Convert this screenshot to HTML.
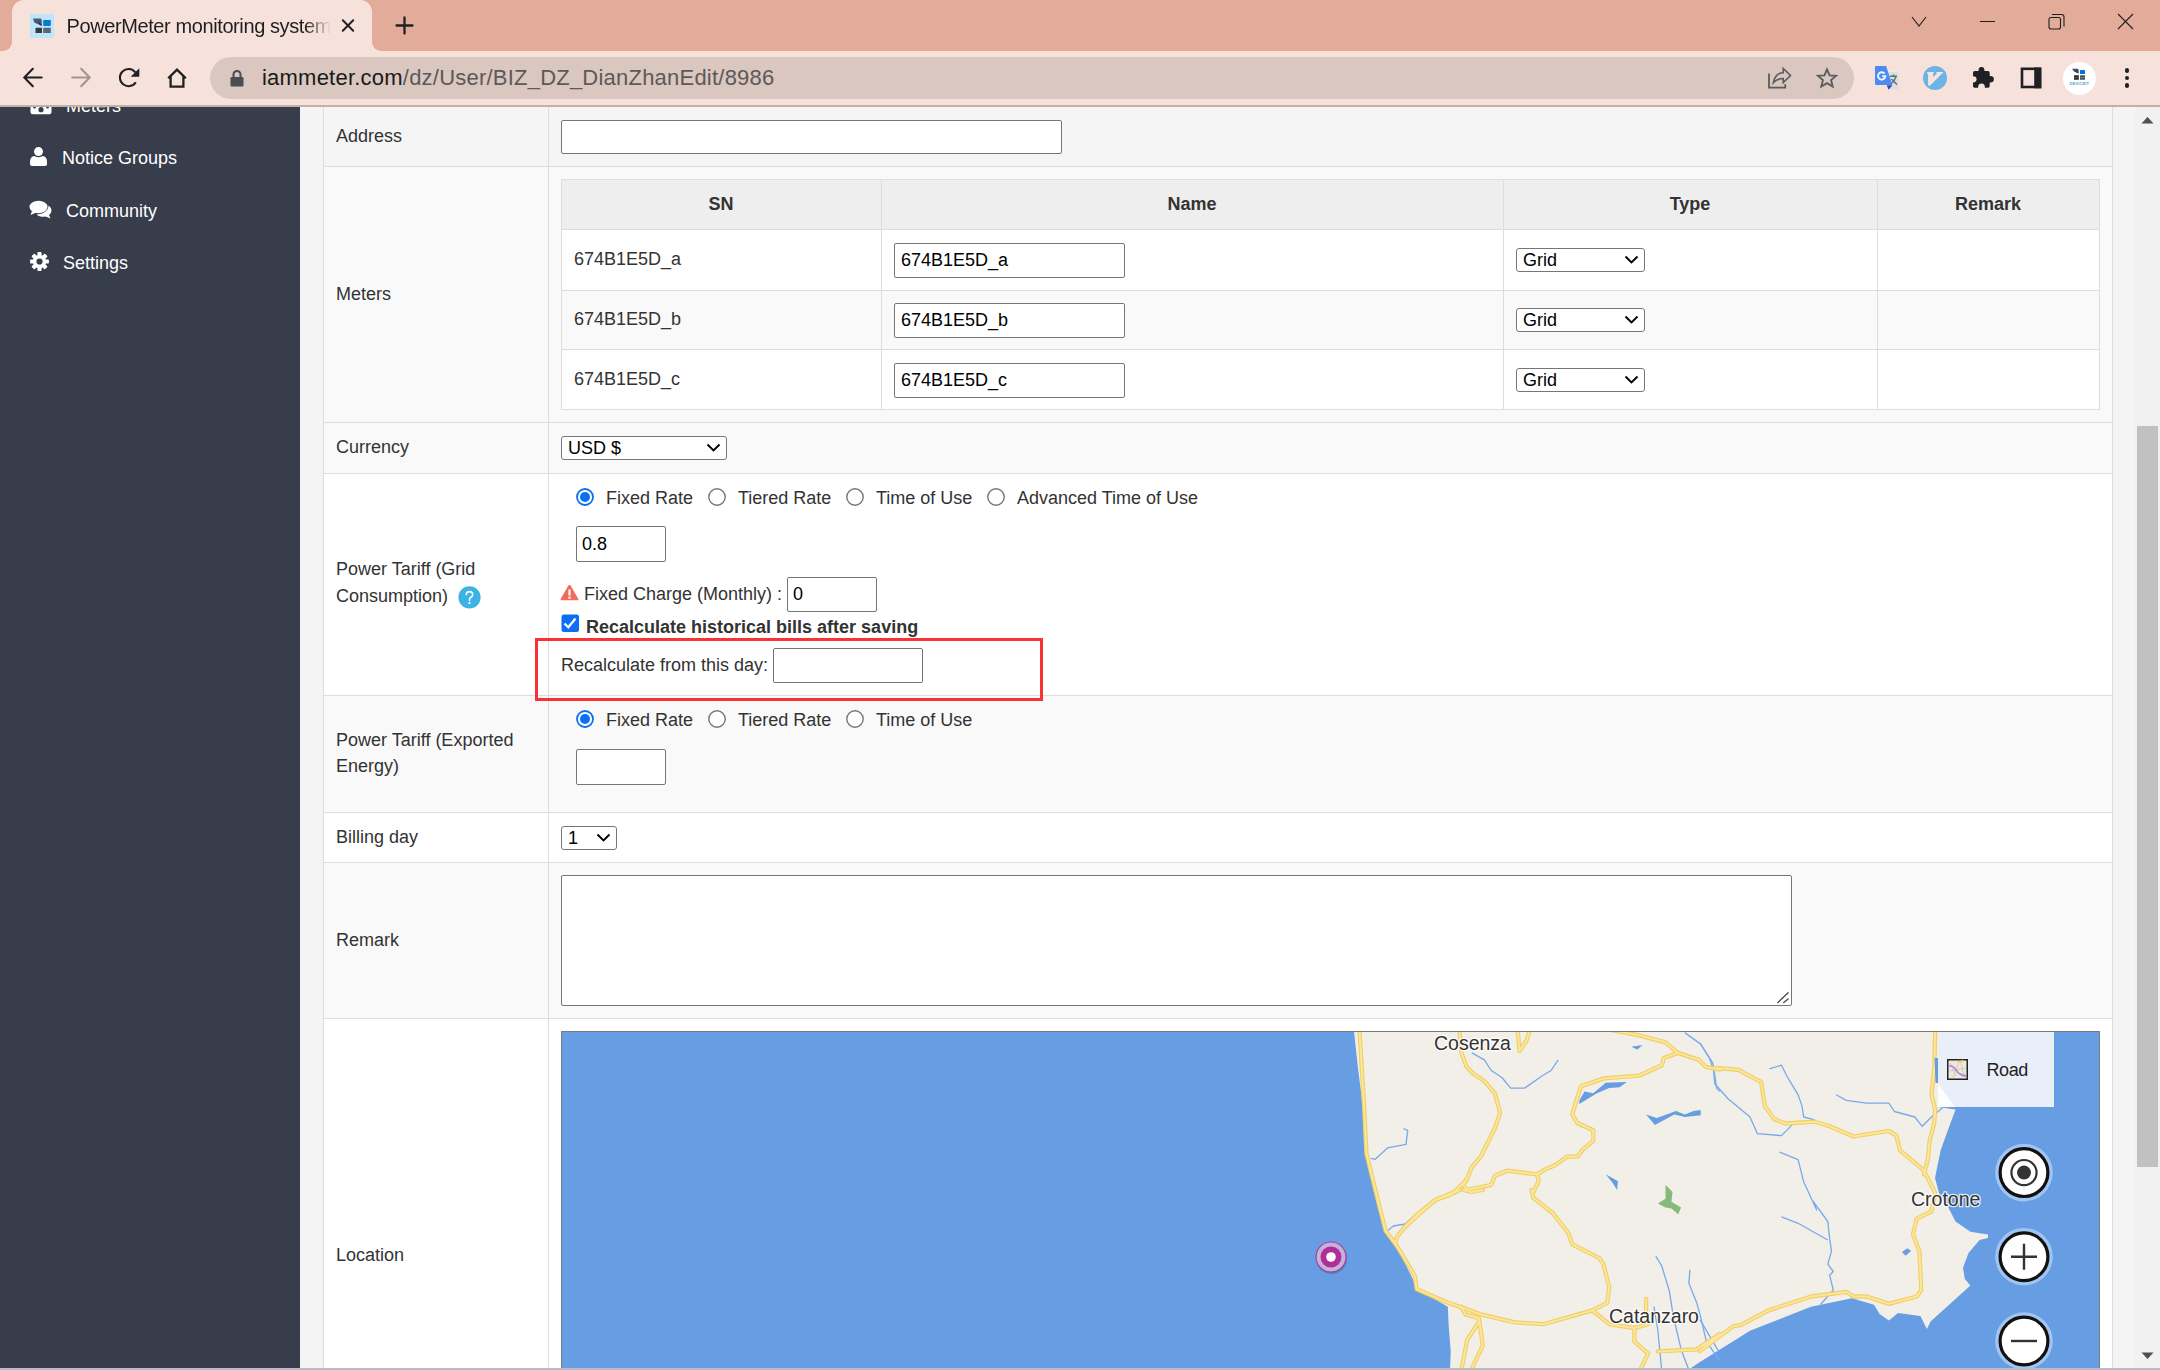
<!DOCTYPE html>
<html><head><meta charset="utf-8">
<style>
*{box-sizing:border-box;margin:0;padding:0}
html,body{width:2160px;height:1370px;overflow:hidden;background:#fff;font-family:"Liberation Sans",sans-serif;}
.a{position:absolute}
#tabbar{left:0;top:0;width:2160px;height:51px;background:#E3AC9A}
#tab{left:12px;top:0px;width:360px;height:51px;background:#F7E2DB;border-radius:12px 12px 0 0}
#toolbar{left:0;top:51px;width:2160px;height:56px;background:#F7E2DB;border-bottom:2px solid #C6AFA9}
#url{left:210px;top:57px;width:1644px;height:42px;background:#D9C7C0;border-radius:21px}
#side{left:0;top:107px;width:300px;height:1263px;background:#383D4B}
#gut{left:300px;top:107px;width:1835px;height:1263px;background:#F4F4F4}
#sb{left:2135px;top:107px;width:25px;height:1263px;background:#F1F1F1}
#thumb{left:2137px;top:426px;width:21px;height:741px;background:#C1C1C1}
#bot{left:0;top:1368px;width:2160px;height:2px;background:#B6BBC3;z-index:10}
.row{position:absolute;left:323px;width:1790px;border:1px solid #DDDDDD;border-top:none}
.lab{position:absolute;left:336px;font-size:18px;line-height:18px;color:#333;white-space:nowrap}
.side{position:absolute;color:#fff;font-size:18px;white-space:nowrap}
.inp{position:absolute;border:1px solid #767676;border-radius:2px;background:#fff}
.sel{position:absolute;border:1px solid #767676;border-radius:3px;background:#fff}
.itx{position:absolute;font-size:18px;line-height:18px;color:#000;white-space:nowrap}
.t{position:absolute;font-size:18px;line-height:18px;color:#333;white-space:nowrap}
.th{position:absolute;font-size:18px;line-height:18px;color:#333;font-weight:bold;text-align:center}
</style></head><body>
<div id="tabbar" class="a"></div>
<div id="tab" class="a"></div>
<div id="toolbar" class="a"></div>
<div id="url" class="a"></div>
<div id="side" class="a"></div>
<div id="gut" class="a"></div>
<div id="sb" class="a"></div>
<div id="thumb" class="a"></div>
<div id="bot" class="a"></div>


<!-- chrome -->
<div class="a" style="left:363px;top:41px;width:18px;height:10px;background:#F7E2DB"></div>
<div class="a" style="left:372px;top:0px;width:20px;height:51px;background:#E3AC9A;border-bottom-left-radius:9px"></div>
<div class="a" style="left:3px;top:41px;width:18px;height:10px;background:#F7E2DB"></div>
<div class="a" style="left:-8px;top:0px;width:20px;height:51px;background:#E3AC9A;border-bottom-right-radius:9px"></div>
<svg class="a" style="left:30px;top:14px" width="24" height="24" viewBox="0 0 24 24">
<rect x="0" y="0" width="24" height="24" fill="#BFE5F8"/>
<path d="M3 4.6 L10.7 4.6 Q11.6 4.8 11.7 6 L12 12 L4.3 8.4 Z" fill="#4A5A78"/>
<path d="M8 7 L12 12 L9.5 10.8 Z" fill="#1F2850"/>
<rect x="13.2" y="6" width="7.6" height="5.9" rx="0.8" fill="#0A78CC"/>
<rect x="5.5" y="13.8" width="6.5" height="5.3" rx="0.6" fill="#353A40"/>
<rect x="13.2" y="13.8" width="7.6" height="5.3" rx="0.6" fill="#56677A"/>
</svg>
<div class="a" style="left:66.5px;top:14px;font-size:20px;line-height:24px;letter-spacing:-0.4px;color:#1F1F1F;white-space:nowrap;width:265px;overflow:hidden;-webkit-mask-image:linear-gradient(to right,#000 238px,transparent 264px)">PowerMeter monitoring system</div>
<svg class="a" style="left:340px;top:18px" width="16" height="16" viewBox="0 0 16 16"><path d="M2.8 2.3 L13.2 12.7 M13.2 2.3 L2.8 12.7" stroke="#1F2023" stroke-width="2" stroke-linecap="round"/></svg>
<svg class="a" style="left:394px;top:15px" width="21" height="21" viewBox="0 0 21 21"><path d="M10.5 2.5 V18.5 M2.5 10.5 H18.5" stroke="#1F2023" stroke-width="2.3" stroke-linecap="round"/></svg>
<svg class="a" style="left:1908px;top:12px" width="22" height="18" viewBox="0 0 22 18"><path d="M4 5 L11 14 L18 5" stroke="#1F1F1F" stroke-width="1.1" fill="none"/></svg>
<div class="a" style="left:1980px;top:21px;width:15px;height:1.3px;background:#1F1F1F"></div>
<svg class="a" style="left:2046px;top:11px" width="22" height="22" viewBox="0 0 22 22"><rect x="3" y="6.5" width="11.5" height="11.5" rx="2" stroke="#1F1F1F" stroke-width="1.1" fill="none"/><path d="M6 3.5 H15.5 Q18 3.5 18 6 V15.5" stroke="#1F1F1F" stroke-width="1.1" fill="none"/></svg>
<svg class="a" style="left:2115px;top:11px" width="21" height="21" viewBox="0 0 21 21"><path d="M3 3 L18 18 M18 3 L3 18" stroke="#1F1F1F" stroke-width="1.1"/></svg>
<!-- toolbar icons -->
<svg class="a" style="left:20px;top:65px" width="26" height="26" viewBox="0 0 26 26"><path d="M12.8 3.8 L4.3 12.5 L12.8 21.2 M4.3 12.5 H21.7" stroke="#1F2023" stroke-width="2.1" fill="none" stroke-linecap="round" stroke-linejoin="miter"/></svg>
<svg class="a" style="left:68px;top:65px" width="26" height="26" viewBox="0 0 26 26"><path d="M13.2 3.8 L21.7 12.5 L13.2 21.2 M4.3 12.5 H21.7" stroke="#A39592" stroke-width="2.1" fill="none" stroke-linecap="round"/></svg>
<svg class="a" style="left:116px;top:65px" width="26" height="26" viewBox="0 0 26 26"><path d="M19.8 17.2 A8.6 8.6 0 1 1 19.3 7.3" stroke="#1F2023" stroke-width="2.1" fill="none"/><path d="M23.3 3.2 V11.8 H14.7 Z" fill="#1F2023"/></svg>
<svg class="a" style="left:164px;top:65px" width="26" height="26" viewBox="0 0 26 26"><path d="M4.2 13.2 L13 4.6 L21.8 13.2 M6.6 11.2 V21.6 H19.4 V11.2" stroke="#1F2023" stroke-width="2.3" fill="none" stroke-linejoin="miter"/></svg>
<svg class="a" style="left:229px;top:69px" width="16" height="19" viewBox="0 0 16 19"><path d="M4.5 8 V5.5 A3.5 3.5 0 0 1 11.5 5.5 V8" stroke="#4A4D52" stroke-width="2" fill="none"/><rect x="1.5" y="8" width="13" height="9.5" rx="1.3" fill="#4A4D52"/></svg>
<div class="a" style="left:262px;top:63px;font-size:22px;line-height:30px;letter-spacing:0.22px;color:#5E5957;white-space:nowrap"><span style="color:#1A1A1A">iammeter.com</span>/dz/User/BIZ_DZ_DianZhanEdit/8986</div>
<svg class="a" style="left:1766px;top:66px" width="28" height="25" viewBox="0 0 28 25"><path d="M3 7.6 V21.6 H19.2 V18.3" stroke="#5B5C5E" stroke-width="1.8" fill="none"/><path d="M7.3 16.8 C8 11 12 6.7 17.2 6.7 V2.4 L24.5 9.5 L17.2 16.6 V12.5 C13 12.5 9.8 14 7.3 16.8 Z" stroke="#5B5C5E" stroke-width="1.6" fill="none" stroke-linejoin="miter"/></svg>
<svg class="a" style="left:1814px;top:66px" width="26" height="24" viewBox="0 0 26 24"><g transform="translate(13 12) scale(0.89) translate(-13 -11.5)"><path d="M13 1.8 L15.9 8.5 L23.2 9.1 L17.6 13.9 L19.4 21 L13 17.2 L6.6 21 L8.4 13.9 L2.8 9.1 L10.1 8.5 Z" stroke="#5B5C5E" stroke-width="2.1" fill="none" stroke-linejoin="miter"/></g></svg>
<svg class="a" style="left:1874px;top:65px" width="26" height="27" viewBox="0 0 26 27"><rect x="14.7" y="5.4" width="9.8" height="19.2" fill="#DEDEDE"/><rect x="14.7" y="5.4" width="9.8" height="1.2" fill="#F2F2F2"/><path d="M16 11.2 H23 M19.5 9.5 V11.2 M22 11.5 Q20 17 16.5 19 M17.5 14 L23 19.5" stroke="#55707A" stroke-width="1.4" fill="none"/><path d="M2 1.1 H12.1 L18.4 20.1 H2.4 Q1 20.1 1 18.7 V2.1 Q1 1.1 2 1.1 Z" fill="#4C8BF0"/><path d="M12.8 20.2 H18.4 L14.5 24.8 Z" fill="#3846B8"/><path d="M10.6 8.6 A3.7 3.7 0 1 0 11.4 11.2 H8.2" stroke="#F4F6FA" stroke-width="1.9" fill="none"/></svg>
<svg class="a" style="left:1923px;top:66px" width="24" height="24" viewBox="0 0 24 24"><circle cx="12" cy="12" r="12" fill="#6AB4E6"/><path d="M4.1 6.05 H10.9 L10.2 8.15 V10.95 L13.7 7.7 L13.2 6.05 H20.7 L7.15 19.6 H5.05 V8.15 L4.1 7.2 Z" fill="#F5E3DD"/></svg>
<svg class="a" style="left:1971px;top:66px" width="24" height="23" viewBox="0 0 24 23"><path d="M3.6 5 H7.6 Q7.2 0.9 10.5 0.9 Q13.8 0.9 13.4 5 H17 Q18.7 5 18.7 6.7 V10 Q22.9 9.8 22.9 13.3 Q22.9 16.8 18.7 16.6 V20.1 Q18.7 21.8 17 21.8 H13.9 Q14 17.6 10.5 17.6 Q7 17.6 7.1 21.8 H3.7 Q2 21.8 2 20.1 V16.4 Q5.6 16.4 5.6 13.3 Q5.6 10.2 2 10.2 V6.7 Q2 5 3.6 5 Z" fill="#1F2023"/></svg>
<svg class="a" style="left:2019px;top:66px" width="24" height="24" viewBox="0 0 24 24"><rect x="3" y="2.8" width="18" height="18.2" stroke="#1F2023" stroke-width="2.6" fill="none"/><rect x="15.2" y="1.5" width="7.1" height="20.8" fill="#1F2023"/></svg>
<svg class="a" style="left:2062px;top:62px" width="34" height="33" viewBox="0 0 34 33"><circle cx="17.4" cy="16.4" r="16.5" fill="#FFFFFF"/><path d="M10 6.7 H15.6 Q16.5 7 16.6 8 L16.8 11.6 L12 9.5 Z" fill="#3B4C6B"/><path d="M13.5 8.5 L16.8 11.6 L14.5 10.6 Z" fill="#1B2450"/><rect x="18" y="8" width="5" height="4" rx="0.6" fill="#0A6FCC"/><rect x="12" y="13.2" width="4.9" height="4.6" rx="0.6" fill="#22262B"/><rect x="18" y="13.2" width="5" height="4.6" rx="0.6" fill="#3E5068"/><path d="M12 15.5 H17 M18 15.5 H23" stroke="#fff" stroke-width="0.4" opacity="0.6"/><text x="17.2" y="23.2" text-anchor="middle" font-family="Liberation Sans" font-weight="bold" font-size="4" textLength="19.5" fill="#45A8DD">DEVICEIT</text></svg>
<div class="a" style="left:2124.7px;top:68px;width:4.6px;height:4.6px;border-radius:50%;background:#1F2023"></div>
<div class="a" style="left:2124.7px;top:75.7px;width:4.6px;height:4.6px;border-radius:50%;background:#1F2023"></div>
<div class="a" style="left:2124.7px;top:83.2px;width:4.6px;height:4.6px;border-radius:50%;background:#1F2023"></div>


<!-- sidebar -->
<div class="a" style="left:0;top:107px;width:300px;height:200px;overflow:hidden">
<svg class="a" style="left:30px;top:-11px" width="22" height="19" viewBox="0 0 22 19"><path d="M0.5 9 Q0.5 1 11 1 Q21.5 1 21.5 9 V16 Q21.5 18.3 19.3 18.3 H2.7 Q0.5 18.3 0.5 16 Z" fill="#fff"/><circle cx="11" cy="13.7" r="2.6" fill="#383D4B"/><circle cx="4.5" cy="11" r="1.5" fill="#383D4B"/><circle cx="17.5" cy="11" r="1.5" fill="#383D4B"/></svg>
<div class="side" style="left:66px;top:-10px;line-height:18px">Meters</div>
</div>
<svg class="a" style="left:29px;top:146px" width="20" height="21" viewBox="0 0 20 21"><circle cx="9.5" cy="5.6" r="4.5" fill="#fff"/><path d="M1 16 Q1 10.5 5.5 10 Q9.5 12.5 13.5 10 Q18 10.5 18 16 V18 Q18 20 16 20 H3 Q1 20 1 18 Z" fill="#fff"/></svg>
<div class="side" style="left:62px;top:149px;line-height:18px">Notice Groups</div>
<svg class="a" style="left:29px;top:200px" width="24" height="21" viewBox="0 0 24 21"><ellipse cx="9.5" cy="7" rx="9" ry="6.2" fill="#fff"/><path d="M3 11 L1.5 15 L7.5 12.5 Z" fill="#fff"/><path d="M19.5 5.5 Q22.5 7.5 22.5 10.5 Q22.5 13.5 20 15 L21.5 18.5 L16.5 16.5 Q14 17 11.5 16.5 Q9 16 7.5 14.5 Q15 14 18 10 Q19.5 8 19.5 5.5 Z" fill="#fff"/></svg>
<div class="side" style="left:66px;top:202px;line-height:18px">Community</div>
<svg class="a" style="left:29px;top:251px" width="21" height="21" viewBox="0 0 21 21"><circle cx="10.5" cy="10.5" r="6.6" fill="#fff"/><g fill="#fff" transform="translate(10.5 10.5)"><rect x="-2.1" y="-9.4" width="4.2" height="5" rx="0.8"/><rect x="-2.1" y="4.4" width="4.2" height="5" rx="0.8"/><rect x="-9.4" y="-2.1" width="5" height="4.2" rx="0.8"/><rect x="4.4" y="-2.1" width="5" height="4.2" rx="0.8"/><g transform="rotate(45)"><rect x="-2.1" y="-9.4" width="4.2" height="5" rx="0.8"/><rect x="-2.1" y="4.4" width="4.2" height="5" rx="0.8"/><rect x="-9.4" y="-2.1" width="5" height="4.2" rx="0.8"/><rect x="4.4" y="-2.1" width="5" height="4.2" rx="0.8"/></g></g><circle cx="10.5" cy="10.5" r="3.1" fill="#383D4B"/></svg>
<div class="side" style="left:63px;top:254px;line-height:18px">Settings</div>

<!-- form rows -->
<div class="row" style="top:107px;height:60px;background:#F5F5F5"></div>
<div class="row" style="top:167px;height:256px;background:#F9F9F9"></div>
<div class="row" style="top:423px;height:51px;background:#F9F9F9"></div>
<div class="row" style="top:474px;height:222px;background:#FFFFFF"></div>
<div class="row" style="top:696px;height:117px;background:#F9F9F9"></div>
<div class="row" style="top:813px;height:50px;background:#FFFFFF"></div>
<div class="row" style="top:863px;height:156px;background:#F9F9F9"></div>
<div class="row" style="top:1019px;height:360px;background:#FFFFFF"></div>
<div class="a" style="left:548px;top:107px;width:1px;height:1263px;background:#DDDDDD"></div>
<div class="lab" style="top:127px">Address</div>
<div class="lab" style="top:285px">Meters</div>
<div class="lab" style="top:438px">Currency</div>
<div class="lab" style="top:556px;line-height:27px">Power Tariff (Grid<br>Consumption)</div>
<div class="lab" style="top:727px;line-height:26px">Power Tariff (Exported<br>Energy)</div>
<div class="lab" style="top:828px">Billing day</div>
<div class="lab" style="top:931px">Remark</div>
<div class="lab" style="top:1246px">Location</div>

<!-- map -->
<svg class="a" style="left:561px;top:1031px" width="1539" height="339" viewBox="0 0 1539 339">
<rect x="0" y="0" width="1539" height="339" fill="#669DE3"/>
<polygon points="793.0,0.0 1377.0,0.0 1377.0,76.0 1394.5,78.6 1379.7,119.0 1374.0,147.0 1378.0,162.0 1387.0,175.7 1394.5,190.5 1409.4,200.7 1427.0,203.4 1427.0,207.0 1418.6,209.0 1407.5,222.0 1402.0,236.8 1403.8,247.9 1409.4,254.4 1369.6,290.5 1365.9,297.9 1359.4,285.0 1337.0,282.0 1327.9,289.6 1318.6,283.0 1313.0,273.8 1290.9,267.3 1250.0,275.7 1189.0,299.7 1139.0,331.0 1127.0,339.0 889.0,339.0 889.7,320.4 887.7,295.0 886.8,275.7 863.4,262.0 855.7,256.2 834.0,211.5 822.6,197.9 814.0,164.0 807.0,131.0 803.6,104.6 801.0,69.0 796.6,34.0 793.0,0.0" fill="#F2EFE9"/>
<polygon points="1018.3,69.4 1023.5,60.6 1032.3,62.3 1044.7,51.8 1065.8,50.9 1058.7,56.2 1048.2,57.1 1035.9,62.3 1018.3,72.9" fill="#669DE3"/>
<polygon points="1085.1,83.4 1095.7,87.0 1115.0,79.9 1123.8,83.4 1132.6,79.9 1139.7,79.0 1139.7,84.3 1123.8,86.1 1113.3,83.4 1093.9,94.0" fill="#669DE3"/>
<polygon points="1070.2,15.7 1081.6,14.0 1076.3,18.4" fill="#669DE3"/>
<polygon points="1044.7,143.3 1057.0,150.3 1056.1,159.1 1051.7,152.1" fill="#669DE3"/>
<polygon points="1340.9,221.0 1346.4,217.3 1350.1,220.1 1344.6,224.7" fill="#669DE3"/>
<polygon points="1104.5,153.8 1111.5,160.9 1110.6,169.0 1110.4,170.7 1120.1,176.5 1117.2,183.3 1110.4,177.5 1104.5,176.5 1096.8,172.6 1104.5,167.7" fill="#86BA7A"/>
<polyline points="910.9,21.9 923.3,28.9 930.3,39.5 940.9,46.5 949.7,57.1 963.7,57.1 981.3,44.7 990.1,39.5 997.2,28.9" fill="none" stroke="#78A9EA" stroke-width="1.3" stroke-linejoin="round"/>
<polyline points="842.3,97.5 846.7,99.3 845.0,113.4 826.5,116.9 814.2,128.3 809.8,127.4" fill="none" stroke="#78A9EA" stroke-width="1.3" stroke-linejoin="round"/>
<polyline points="1139.0,12.0 1152.0,32.3 1153.8,52.7 1166.8,67.5 1189.0,86.0 1196.4,102.7 1220.5,104.6 1231.6,93.4" fill="none" stroke="#78A9EA" stroke-width="1.3" stroke-linejoin="round"/>
<polyline points="1123.8,1.6 1139.7,13.1 1148.5,27.1 1153.7,43.0 1155.5,57.1 1159.0,60.6" fill="none" stroke="#78A9EA" stroke-width="1.3" stroke-linejoin="round"/>
<polyline points="1208.4,37.9 1220.5,34.2 1226.0,45.3 1237.1,63.8 1240.9,74.9 1242.7,86.0 1253.8,88.8" fill="none" stroke="#78A9EA" stroke-width="1.3" stroke-linejoin="round"/>
<polyline points="1275.1,63.8 1285.3,69.4 1305.7,72.1 1327.9,72.1 1333.4,80.5 1353.8,86.0 1361.2,95.3 1370.5,86.0 1381.6,76.8" fill="none" stroke="#78A9EA" stroke-width="1.3" stroke-linejoin="round"/>
<polyline points="1218.6,121.2 1237.1,128.6 1242.7,150.9 1255.7,179.0 1252.0,170.1 1266.8,190.5 1268.6,207.1 1270.5,220.1 1266.8,233.1 1272.3,240.5 1268.6,244.2 1272.3,259.0 1259.4,273.8" fill="none" stroke="#78A9EA" stroke-width="1.3" stroke-linejoin="round"/>
<polyline points="1220.5,185.9 1237.1,192.3 1266.8,209.0" fill="none" stroke="#78A9EA" stroke-width="1.3" stroke-linejoin="round"/>
<polyline points="1139.0,288.6 1157.5,320.1" fill="none" stroke="#78A9EA" stroke-width="1.3" stroke-linejoin="round"/>
<polyline points="826.5,199.8 832.3,195.0 844.0,193.0 851.8,186.2 863.4,176.5 869.3,172.6" fill="none" stroke="#78A9EA" stroke-width="1.3" stroke-linejoin="round"/>
<polyline points="1094.8,225.1 1100.7,234.8 1108.4,260.1 1112.3,285.4 1120.1,318.4 1127.9,339.1" fill="none" stroke="#78A9EA" stroke-width="1.3" stroke-linejoin="round"/>
<polyline points="1128.9,238.7 1127.9,252.3 1135.7,271.8 1139.5,285.4 1145.4,310.7 1159.0,330.1" fill="none" stroke="#78A9EA" stroke-width="1.3" stroke-linejoin="round"/>
<polyline points="1092.9,275.7 1096.8,299.0 1100.7,339.1" fill="none" stroke="#78A9EA" stroke-width="1.3" stroke-linejoin="round"/>
<polyline points="798.4,-1.0 802.8,69.4 805.4,122.2 816.8,169.0 824.6,199.8 836.2,215.4 853.7,244.6 855.7,258.2 886.8,271.8 904.3,277.6 919.8,283.4 952.9,291.2 982.0,293.2 1030.7,279.6 1046.2,271.8 1048.2,256.2 1042.3,232.9 1038.4,227.1 1011.2,213.4 1007.3,201.8 991.8,182.3 972.3,166.8 970.4,159.0 972.5,160.9 977.8,150.3 976.0,143.3" fill="none" stroke="#F0CF66" stroke-width="4.3" stroke-linejoin="round" stroke-linecap="round"/>
<polyline points="898.6,-1.0 900.4,21.9 905.7,35.9 912.7,43.0 923.3,50.0 933.8,62.3 939.1,81.7 933.8,97.5 926.8,111.6 919.7,125.7 910.9,136.2 905.7,148.5 893.4,160.9 874.0,169.0 844.0,195.9 836.2,205.7 834.3,211.5" fill="none" stroke="#F0CF66" stroke-width="4.3" stroke-linejoin="round" stroke-linecap="round"/>
<polyline points="844.0,195.9 857.6,182.3 875.1,168.7 886.8,164.8 898.4,159.0" fill="none" stroke="#F0CF66" stroke-width="4.3" stroke-linejoin="round" stroke-linecap="round"/>
<polyline points="956.7,-1.0 958.5,20.1 965.5,9.6 969.0,-1.0" fill="none" stroke="#F0CF66" stroke-width="4.3" stroke-linejoin="round" stroke-linecap="round"/>
<polyline points="1049.9,-1.0 1078.1,4.3 1104.5,11.3 1116.8,21.9 1137.9,28.9 1144.9,35.9 1159.0,38.6 1155.7,37.0 1177.9,38.8 1185.3,43.4 1200.1,50.9 1203.8,74.9 1213.1,87.9 1224.2,92.5 1253.8,90.7 1268.6,95.3 1292.7,105.5 1327.9,99.9 1335.3,104.6 1339.0,119.4 1361.2,137.9 1366.8,147.1 1374.2,162.0 1370.5,180.3 1355.7,187.7 1352.0,203.4 1358.4,220.1 1360.3,259.0 1355.7,265.5 1327.9,272.9 1305.7,265.5 1292.7,265.5 1285.3,260.9 1250.1,265.5 1207.5,279.4 1179.7,294.2 1172.3,295.1 1139.0,320.1 1159.0,302.9 1135.7,318.4 1096.8,320.4" fill="none" stroke="#F0CF66" stroke-width="4.3" stroke-linejoin="round" stroke-linecap="round"/>
<polyline points="1116.8,21.9 1102.7,27.1 1101.0,34.2 1078.1,44.7 1042.9,47.4 1020.0,55.3 1016.5,65.9 1011.2,83.4 1016.5,92.2 1032.3,99.3 1032.3,109.8 1021.8,118.6 1016.5,125.7 1006.0,125.7 993.6,134.5 984.8,138.0 976.0,143.3 946.1,139.7 933.8,145.0 930.3,153.8 905.7,159.1 902.2,153.8 905.7,148.5" fill="none" stroke="#F0CF66" stroke-width="4.3" stroke-linejoin="round" stroke-linecap="round"/>
<polyline points="1374.2,-1.0 1373.3,36.0 1370.5,63.8 1374.2,78.6 1373.3,91.6 1368.6,110.1 1366.8,128.6 1363.1,143.4" fill="none" stroke="#F0CF66" stroke-width="4.3" stroke-linejoin="round" stroke-linecap="round"/>
<polyline points="1032.6,280.5 1048.2,293.2 1073.4,297.1 1087.0,293.2" fill="none" stroke="#F0CF66" stroke-width="4.3" stroke-linejoin="round" stroke-linecap="round"/>
<polyline points="1073.4,297.1 1073.4,310.7 1087.0,322.3 1079.3,339.1" fill="none" stroke="#F0CF66" stroke-width="4.3" stroke-linejoin="round" stroke-linecap="round"/>
<polyline points="900.4,275.7 904.3,283.4 917.9,287.3 921.8,314.6 910.1,339.1" fill="none" stroke="#F0CF66" stroke-width="4.3" stroke-linejoin="round" stroke-linecap="round"/>
<polyline points="917.9,291.2 906.2,308.7 900.4,339.1" fill="none" stroke="#F0CF66" stroke-width="4.3" stroke-linejoin="round" stroke-linecap="round"/>
<polyline points="1085.1,267.9 1085.1,279.6" fill="none" stroke="#F0CF66" stroke-width="4.3" stroke-linejoin="round" stroke-linecap="round"/>
<polyline points="902.3,159.0 910.1,160.9 921.8,159.0" fill="none" stroke="#F0CF66" stroke-width="4.3" stroke-linejoin="round" stroke-linecap="round"/>
<polyline points="798.4,-1.0 802.8,69.4 805.4,122.2 816.8,169.0 824.6,199.8 836.2,215.4 853.7,244.6 855.7,258.2 886.8,271.8 904.3,277.6 919.8,283.4 952.9,291.2 982.0,293.2 1030.7,279.6 1046.2,271.8 1048.2,256.2 1042.3,232.9 1038.4,227.1 1011.2,213.4 1007.3,201.8 991.8,182.3 972.3,166.8 970.4,159.0 972.5,160.9 977.8,150.3 976.0,143.3" fill="none" stroke="#FBE69C" stroke-width="2.0" stroke-linejoin="round" stroke-linecap="round"/>
<polyline points="898.6,-1.0 900.4,21.9 905.7,35.9 912.7,43.0 923.3,50.0 933.8,62.3 939.1,81.7 933.8,97.5 926.8,111.6 919.7,125.7 910.9,136.2 905.7,148.5 893.4,160.9 874.0,169.0 844.0,195.9 836.2,205.7 834.3,211.5" fill="none" stroke="#FBE69C" stroke-width="2.0" stroke-linejoin="round" stroke-linecap="round"/>
<polyline points="844.0,195.9 857.6,182.3 875.1,168.7 886.8,164.8 898.4,159.0" fill="none" stroke="#FBE69C" stroke-width="2.0" stroke-linejoin="round" stroke-linecap="round"/>
<polyline points="956.7,-1.0 958.5,20.1 965.5,9.6 969.0,-1.0" fill="none" stroke="#FBE69C" stroke-width="2.0" stroke-linejoin="round" stroke-linecap="round"/>
<polyline points="1049.9,-1.0 1078.1,4.3 1104.5,11.3 1116.8,21.9 1137.9,28.9 1144.9,35.9 1159.0,38.6 1155.7,37.0 1177.9,38.8 1185.3,43.4 1200.1,50.9 1203.8,74.9 1213.1,87.9 1224.2,92.5 1253.8,90.7 1268.6,95.3 1292.7,105.5 1327.9,99.9 1335.3,104.6 1339.0,119.4 1361.2,137.9 1366.8,147.1 1374.2,162.0 1370.5,180.3 1355.7,187.7 1352.0,203.4 1358.4,220.1 1360.3,259.0 1355.7,265.5 1327.9,272.9 1305.7,265.5 1292.7,265.5 1285.3,260.9 1250.1,265.5 1207.5,279.4 1179.7,294.2 1172.3,295.1 1139.0,320.1 1159.0,302.9 1135.7,318.4 1096.8,320.4" fill="none" stroke="#FBE69C" stroke-width="2.0" stroke-linejoin="round" stroke-linecap="round"/>
<polyline points="1116.8,21.9 1102.7,27.1 1101.0,34.2 1078.1,44.7 1042.9,47.4 1020.0,55.3 1016.5,65.9 1011.2,83.4 1016.5,92.2 1032.3,99.3 1032.3,109.8 1021.8,118.6 1016.5,125.7 1006.0,125.7 993.6,134.5 984.8,138.0 976.0,143.3 946.1,139.7 933.8,145.0 930.3,153.8 905.7,159.1 902.2,153.8 905.7,148.5" fill="none" stroke="#FBE69C" stroke-width="2.0" stroke-linejoin="round" stroke-linecap="round"/>
<polyline points="1374.2,-1.0 1373.3,36.0 1370.5,63.8 1374.2,78.6 1373.3,91.6 1368.6,110.1 1366.8,128.6 1363.1,143.4" fill="none" stroke="#FBE69C" stroke-width="2.0" stroke-linejoin="round" stroke-linecap="round"/>
<polyline points="1032.6,280.5 1048.2,293.2 1073.4,297.1 1087.0,293.2" fill="none" stroke="#FBE69C" stroke-width="2.0" stroke-linejoin="round" stroke-linecap="round"/>
<polyline points="1073.4,297.1 1073.4,310.7 1087.0,322.3 1079.3,339.1" fill="none" stroke="#FBE69C" stroke-width="2.0" stroke-linejoin="round" stroke-linecap="round"/>
<polyline points="900.4,275.7 904.3,283.4 917.9,287.3 921.8,314.6 910.1,339.1" fill="none" stroke="#FBE69C" stroke-width="2.0" stroke-linejoin="round" stroke-linecap="round"/>
<polyline points="917.9,291.2 906.2,308.7 900.4,339.1" fill="none" stroke="#FBE69C" stroke-width="2.0" stroke-linejoin="round" stroke-linecap="round"/>
<polyline points="1085.1,267.9 1085.1,279.6" fill="none" stroke="#FBE69C" stroke-width="2.0" stroke-linejoin="round" stroke-linecap="round"/>
<polyline points="902.3,159.0 910.1,160.9 921.8,159.0" fill="none" stroke="#FBE69C" stroke-width="2.0" stroke-linejoin="round" stroke-linecap="round"/>
<text x="873" y="19" font-family="Liberation Sans" font-size="19.5" fill="#333" stroke="#fff" stroke-width="2.5" paint-order="stroke" stroke-opacity="0.8">Cosenza</text>
<text x="1350" y="174.5" font-family="Liberation Sans" font-size="19.5" fill="#333" stroke="#fff" stroke-width="2.5" paint-order="stroke" stroke-opacity="0.8">Crotone</text>
<text x="1048" y="291.5999999999999" font-family="Liberation Sans" font-size="19.5" fill="#333" stroke="#fff" stroke-width="2.5" paint-order="stroke" stroke-opacity="0.8">Catanzaro</text>
<rect x="1377" y="0" width="116" height="76" fill="#E9EFF9"/>
<polygon points="1377.0,53.0 1377.0,76.0 1394.0,76.0" fill="#FDFDFC"/>
<polygon points="1373.5,27.0 1377.0,27.0 1377.0,52.0 1374.5,52.0" fill="#669DE3"/>
<g transform="translate(1386,28)"><rect x="0.75" y="0.75" width="19.5" height="19.5" fill="#EDE8DD" stroke="#222" stroke-width="1.5"/><path d="M3 4 L9 17 M12 2 L6 19 M2 12 L19 9 M14 3 L17 18" stroke="#C9BFAE" stroke-width="0.7"/><path d="M2 7 Q6 6 9 11 Q12 16 19 17" stroke="#B98BD8" stroke-width="1.8" fill="none"/><path d="M10 2 Q14 3 16 1" stroke="#F0B04A" stroke-width="1.2" fill="none"/></g>
<text x="1425.5" y="45" font-family="Liberation Sans" font-size="18" letter-spacing="-0.4" fill="#222">Road</text>
<circle cx="1463" cy="141.5999999999999" r="28.8" fill="#A2C4F2"/><circle cx="1463" cy="141.5999999999999" r="23.9" fill="#fff" stroke="#111" stroke-width="3.2"/>
<circle cx="1463" cy="141.5999999999999" r="12.6" fill="none" stroke="#333" stroke-width="2.2"/><circle cx="1463" cy="141.5999999999999" r="7" fill="#333"/>
<circle cx="1463" cy="225.70000000000005" r="28.8" fill="#A2C4F2"/><circle cx="1463" cy="225.70000000000005" r="23.9" fill="#fff" stroke="#111" stroke-width="3.2"/>
<path d="M1450 225.70000000000005 H1476 M1463 212.70000000000005 V238.70000000000005" stroke="#333" stroke-width="2.4"/>
<circle cx="1463" cy="310" r="28.8" fill="#A2C4F2"/><circle cx="1463" cy="310" r="23.9" fill="#fff" stroke="#111" stroke-width="3.2"/>
<path d="M1450 310 H1476" stroke="#333" stroke-width="2.4"/>
<circle cx="770.5" cy="227.5" r="15.5" fill="#000" opacity="0.18"/>
<circle cx="770" cy="226" r="15" fill="#C2B3DA" stroke="#B43A9E" stroke-width="1.2"/><circle cx="770" cy="226" r="10.5" fill="#B22D9C"/><circle cx="770" cy="226" r="4.8" fill="#fff"/>
<path d="M0.5 339 V0.5 H1538.5 V339" fill="none" stroke="#7A7A7A" stroke-width="1"/>
</svg>
<!-- /map -->

<!-- help & scrollbar arrows -->
<svg class="a" style="left:458px;top:586px" width="23" height="23" viewBox="0 0 23 23"><circle cx="11.5" cy="11.3" r="11.1" fill="#3BB3E4"/><path d="M8.3 8.6 Q8.3 5.6 11.5 5.6 Q14.7 5.6 14.7 8.4 Q14.7 10.2 12.8 11.3 Q11.5 12.1 11.5 13.8 V14.6" stroke="#fff" stroke-width="1.6" fill="none" stroke-linecap="round"/><circle cx="11.5" cy="17.2" r="1.1" fill="#fff"/></svg>
<svg class="a" style="left:2141px;top:116px" width="13" height="8" viewBox="0 0 13 8"><path d="M0.5 7.5 L6.5 1 L12.5 7.5 Z" fill="#505050"/></svg>
<svg class="a" style="left:2141px;top:1352px" width="13" height="8" viewBox="0 0 13 8"><path d="M0.5 0.5 L6.5 7 L12.5 0.5 Z" fill="#505050"/></svg>
<!-- controls -->
<div class="inp" style="left:561px;top:120px;width:501px;height:34px"></div>
<div class="a" style="left:561px;top:179px;width:1539px;height:231px;border:1px solid #DDDDDD;background:#fff"></div>
<div class="a" style="left:562px;top:180px;width:1537px;height:50px;background:#EEEEEE;border-bottom:1px solid #DDDDDD"></div>
<div class="a" style="left:562px;top:290px;width:1537px;height:60px;background:#F9F9F9;border-top:1px solid #DDDDDD;border-bottom:1px solid #DDDDDD"></div>
<div class="a" style="left:881px;top:179px;width:1px;height:231px;background:#DDDDDD"></div>
<div class="a" style="left:1503px;top:179px;width:1px;height:231px;background:#DDDDDD"></div>
<div class="a" style="left:1877px;top:179px;width:1px;height:231px;background:#DDDDDD"></div>
<div class="th" style="left:621px;top:195px;width:200px">SN</div>
<div class="th" style="left:1092px;top:195px;width:200px">Name</div>
<div class="th" style="left:1590px;top:195px;width:200px">Type</div>
<div class="th" style="left:1888px;top:195px;width:200px">Remark</div>
<div class="t" style="left:574px;top:250px">674B1E5D_a</div>
<div class="inp" style="left:894px;top:243px;width:231px;height:35px"></div><div class="itx" style="left:901px;top:251px">674B1E5D_a</div>
<div class="sel" style="left:1516px;top:248px;width:129px;height:24px"></div><div class="itx" style="left:1523px;top:251px">Grid</div><svg class="a" style="left:1624px;top:255px" width="15" height="10" viewBox="0 0 15 10"><path d="M1.5 1.5 L7.5 7.5 L13.5 1.5" stroke="#000" stroke-width="1.9" fill="none"/></svg>
<div class="t" style="left:574px;top:310px">674B1E5D_b</div>
<div class="inp" style="left:894px;top:303px;width:231px;height:35px"></div><div class="itx" style="left:901px;top:311px">674B1E5D_b</div>
<div class="sel" style="left:1516px;top:308px;width:129px;height:24px"></div><div class="itx" style="left:1523px;top:311px">Grid</div><svg class="a" style="left:1624px;top:315px" width="15" height="10" viewBox="0 0 15 10"><path d="M1.5 1.5 L7.5 7.5 L13.5 1.5" stroke="#000" stroke-width="1.9" fill="none"/></svg>
<div class="t" style="left:574px;top:370px">674B1E5D_c</div>
<div class="inp" style="left:894px;top:363px;width:231px;height:35px"></div><div class="itx" style="left:901px;top:371px">674B1E5D_c</div>
<div class="sel" style="left:1516px;top:368px;width:129px;height:24px"></div><div class="itx" style="left:1523px;top:371px">Grid</div><svg class="a" style="left:1624px;top:375px" width="15" height="10" viewBox="0 0 15 10"><path d="M1.5 1.5 L7.5 7.5 L13.5 1.5" stroke="#000" stroke-width="1.9" fill="none"/></svg>
<div class="sel" style="left:561px;top:436px;width:166px;height:24px"></div><div class="itx" style="left:568px;top:439px">USD $</div><svg class="a" style="left:706px;top:443px" width="15" height="10" viewBox="0 0 15 10"><path d="M1.5 1.5 L7.5 7.5 L13.5 1.5" stroke="#000" stroke-width="1.9" fill="none"/></svg>
<svg class="a" style="left:575px;top:487px" width="20" height="20" viewBox="0 0 20 20"><circle cx="10" cy="10" r="8" stroke="#0B6EF5" stroke-width="1.8" fill="#fff"/><circle cx="10" cy="10" r="5" fill="#0B6EF5"/></svg>
<div class="t" style="left:606px;top:489px">Fixed Rate</div>
<svg class="a" style="left:707px;top:487px" width="20" height="20" viewBox="0 0 20 20"><circle cx="10" cy="10" r="8.2" stroke="#767676" stroke-width="1.4" fill="#fff"/></svg>
<div class="t" style="left:738px;top:489px">Tiered Rate</div>
<svg class="a" style="left:845px;top:487px" width="20" height="20" viewBox="0 0 20 20"><circle cx="10" cy="10" r="8.2" stroke="#767676" stroke-width="1.4" fill="#fff"/></svg>
<div class="t" style="left:876px;top:489px">Time of Use</div>
<svg class="a" style="left:986px;top:487px" width="20" height="20" viewBox="0 0 20 20"><circle cx="10" cy="10" r="8.2" stroke="#767676" stroke-width="1.4" fill="#fff"/></svg>
<div class="t" style="left:1017px;top:489px">Advanced Time of Use</div>
<div class="inp" style="left:576px;top:526px;width:90px;height:36px"></div><div class="itx" style="left:582px;top:535px">0.8</div>
<svg class="a" style="left:560px;top:584px" width="19" height="17" viewBox="0 0 19 17"><path d="M9.5 1 Q10.3 1 10.8 1.8 L18.3 15 Q18.8 16.3 17.5 16.3 H1.5 Q0.2 16.3 0.7 15 L8.2 1.8 Q8.7 1 9.5 1 Z" fill="#F26A5A"/><rect x="8.4" y="5.5" width="2.2" height="6" fill="#fff"/><rect x="8.4" y="12.6" width="2.2" height="2.2" fill="#fff"/></svg>
<div class="t" style="left:584px;top:585px">Fixed Charge (Monthly) :</div>
<div class="inp" style="left:787px;top:577px;width:90px;height:35px"></div><div class="itx" style="left:793px;top:585px">0</div>
<svg class="a" style="left:561px;top:614px" width="19" height="19" viewBox="0 0 19 19"><rect x="0.5" y="0.5" width="17.5" height="17.5" rx="2.5" fill="#0B6EF5"/><path d="M3.5 9.5 L7.3 13.2 L14.5 4.5" stroke="#fff" stroke-width="2.3" fill="none"/></svg>
<div class="t" style="left:586px;top:618px"><b>Recalculate historical bills after saving</b></div>
<div class="t" style="left:561px;top:656px">Recalculate from this day:</div>
<div class="inp" style="left:773px;top:648px;width:150px;height:35px"></div>
<div class="a" style="left:535px;top:638px;width:508px;height:63px;border:3px solid #F93333"></div>
<svg class="a" style="left:575px;top:709px" width="20" height="20" viewBox="0 0 20 20"><circle cx="10" cy="10" r="8" stroke="#0B6EF5" stroke-width="1.8" fill="#fff"/><circle cx="10" cy="10" r="5" fill="#0B6EF5"/></svg>
<div class="t" style="left:606px;top:711px">Fixed Rate</div>
<svg class="a" style="left:707px;top:709px" width="20" height="20" viewBox="0 0 20 20"><circle cx="10" cy="10" r="8.2" stroke="#767676" stroke-width="1.4" fill="#fff"/></svg>
<div class="t" style="left:738px;top:711px">Tiered Rate</div>
<svg class="a" style="left:845px;top:709px" width="20" height="20" viewBox="0 0 20 20"><circle cx="10" cy="10" r="8.2" stroke="#767676" stroke-width="1.4" fill="#fff"/></svg>
<div class="t" style="left:876px;top:711px">Time of Use</div>
<div class="inp" style="left:576px;top:749px;width:90px;height:36px"></div>
<div class="sel" style="left:561px;top:826px;width:56px;height:24px"></div><div class="itx" style="left:568px;top:829px">1</div><svg class="a" style="left:596px;top:833px" width="15" height="10" viewBox="0 0 15 10"><path d="M1.5 1.5 L7.5 7.5 L13.5 1.5" stroke="#000" stroke-width="1.9" fill="none"/></svg>
<div class="inp" style="left:561px;top:875px;width:1231px;height:131px"></div>
<svg class="a" style="left:1774px;top:988px" width="16" height="16" viewBox="0 0 16 16"><path d="M3.9 14.5 L14.1 4.8 M9.75 14.5 L14.1 10.9" stroke="#4A4A4A" stroke-width="1.3" stroke-linecap="round"/></svg>
</body></html>
